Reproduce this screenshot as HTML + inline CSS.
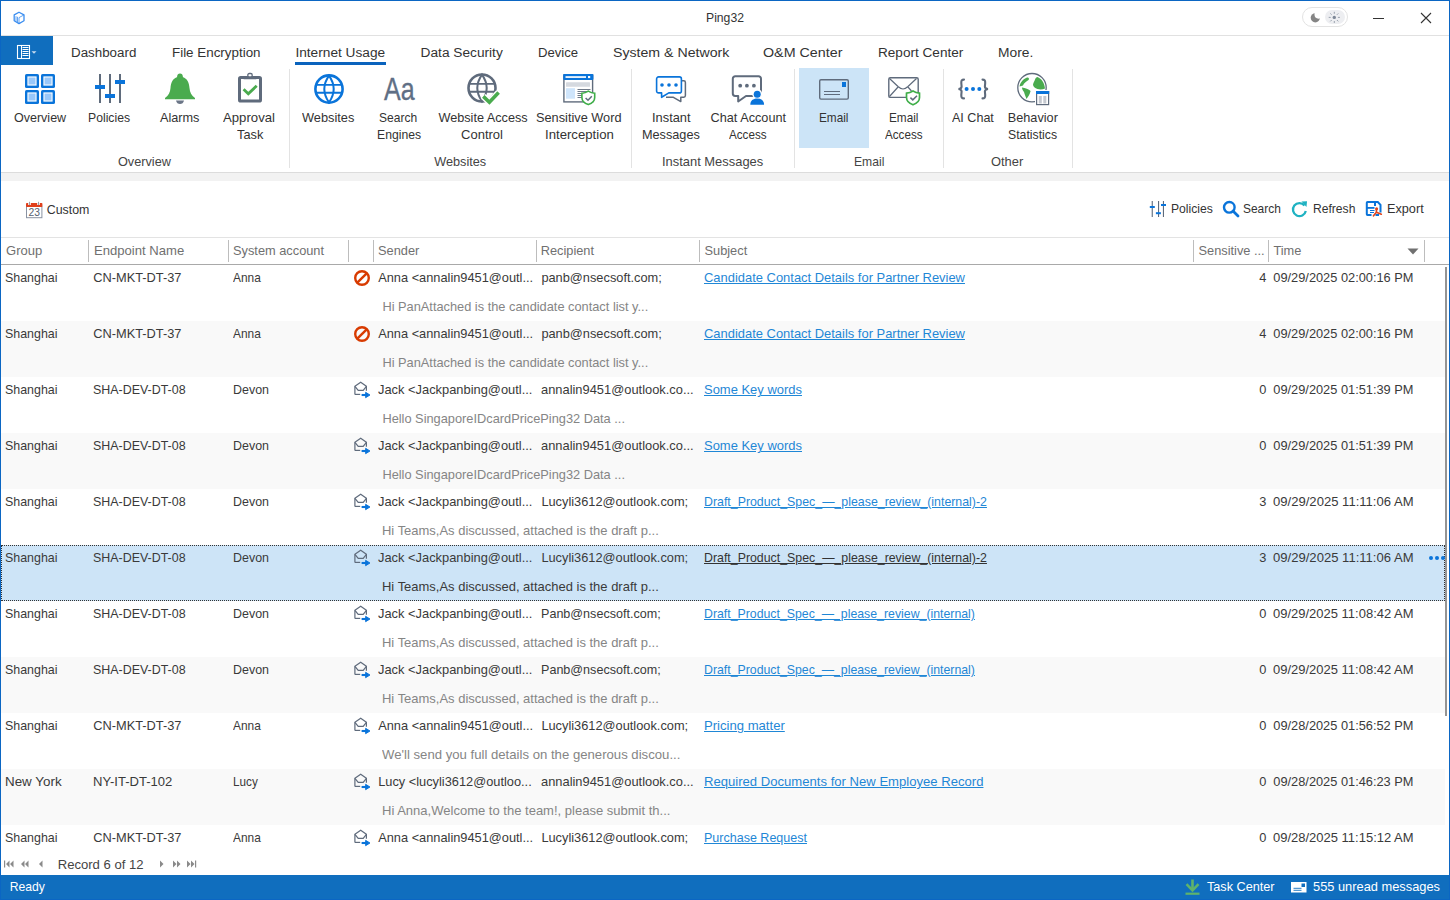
<!DOCTYPE html>
<html><head><meta charset="utf-8"><style>
html,body{margin:0;padding:0;}
body{width:1450px;height:900px;overflow:hidden;position:relative;background:#fff;font-family:"Liberation Sans",sans-serif;}
.t{position:absolute;white-space:nowrap;transform-origin:left top;}
.r{position:absolute;}
svg.r{overflow:visible;}
</style></head><body>
<svg class="r" style="left:13px;top:11px" width="12" height="14" viewBox="0 0 12 14"><path d="M6 1.2 L11 3.9 L11 9.8 L6 12.6 L1.2 9.8 L1.2 3.9 Z" fill="none" stroke="#3b8ef0" stroke-width="1.3" stroke-linejoin="round"/><path d="M6 6.6 L11 3.9 M6 6.6 L6 12.6 M3 5.2 V10.6 M4.5 5.8 V11.4" stroke="#3b8ef0" stroke-width="0.8" fill="none"/></svg>
<div class="t" style="left:706.00px;top:11.87px;font-size:12.2px;line-height:12.2px;color:#333;">Ping32</div>
<div class="r" style="left:1302px;top:7px;width:44px;height:18px;background:#fff;border:1px solid #e3e3e3;border-radius:10px;"></div>
<div class="r" style="left:1325px;top:10px;width:20px;height:14px;background:#edeef1;border-radius:7px;"></div>
<svg class="r" style="left:1309px;top:11px" width="13" height="13" viewBox="0 0 13 13"><circle cx="6.3" cy="6.8" r="4.6" fill="#858585"/><circle cx="9.6" cy="3.6" r="4.1" fill="#fff"/></svg>
<svg class="r" style="left:1327px;top:10px" width="15" height="15" viewBox="0 0 15 15"><circle cx="7.3" cy="7.4" r="1.7" fill="#7d8797"/><g stroke="#8f98a6" stroke-width="0.9" stroke-linecap="round"><path d="M7.3 2.2v1.2M7.3 11.4v1.2M2.1 7.4h1.2M11.3 7.4h1.2M3.6 3.7l0.8 0.8M10.2 10.3l0.8 0.8M3.6 11.1l0.8-0.8M10.2 4.5l0.8-0.8"/></g></svg>
<div class="r" style="left:1373px;top:18px;width:11px;height:1px;background:#333;"></div>
<svg class="r" style="left:1420px;top:12px" width="12" height="12" viewBox="0 0 12 12"><path d="M1 1 L11 11 M11 1 L1 11" stroke="#333" stroke-width="1.1"/></svg>
<div class="r" style="left:1px;top:35px;width:1448px;height:1px;background:#e1e1e1;"></div>
<div class="r" style="left:1px;top:36px;width:52px;height:29px;background:#106ebe;"></div>
<svg class="r" style="left:16px;top:44px" width="24" height="16" viewBox="0 0 24 16"><rect x="1.5" y="1.5" width="12" height="13" fill="none" stroke="#fff" stroke-width="1.1"/><path d="M5.5 2v12" stroke="#fff" stroke-width="1"/><path d="M6.5 3.5h6M6.5 5.5h6M6.5 7.5h6M6.5 9.5h6M6.5 11.5h6" stroke="#fff" stroke-width="1"/><path d="M15.5 7.2 L20.5 7.2 L18 9.8 Z" fill="#c9dcef"/></svg>
<div class="t" style="left:70.80px;top:46.40px;font-size:13.7px;line-height:13.7px;color:#333;transform:scaleX(0.9759);">Dashboard</div>
<div class="t" style="left:171.60px;top:46.40px;font-size:13.7px;line-height:13.7px;color:#333;transform:scaleX(0.9779);">File Encryption</div>
<div class="t" style="left:295.40px;top:46.40px;font-size:13.7px;line-height:13.7px;color:#333;">Internet Usage</div>
<div class="t" style="left:420.60px;top:46.40px;font-size:13.7px;line-height:13.7px;color:#333;">Data Security</div>
<div class="t" style="left:537.60px;top:46.40px;font-size:13.7px;line-height:13.7px;color:#333;transform:scaleX(0.9600);">Device</div>
<div class="t" style="left:612.60px;top:46.40px;font-size:13.7px;line-height:13.7px;color:#333;transform:scaleX(1.0331);">System &amp; Network</div>
<div class="t" style="left:763.20px;top:46.40px;font-size:13.7px;line-height:13.7px;color:#333;transform:scaleX(1.0443);">O&amp;M Center</div>
<div class="t" style="left:877.60px;top:46.40px;font-size:13.7px;line-height:13.7px;color:#333;transform:scaleX(0.9926);">Report Center</div>
<div class="t" style="left:997.70px;top:46.40px;font-size:13.7px;line-height:13.7px;color:#333;transform:scaleX(1.0081);">More.</div>
<div class="r" style="left:295px;top:62px;width:91px;height:3px;background:#0a63bd;"></div>
<div class="r" style="left:289px;top:69px;width:1px;height:99px;background:#e3e3e3;"></div>
<div class="r" style="left:631px;top:69px;width:1px;height:99px;background:#e3e3e3;"></div>
<div class="r" style="left:794px;top:69px;width:1px;height:99px;background:#e3e3e3;"></div>
<div class="r" style="left:943px;top:69px;width:1px;height:99px;background:#e3e3e3;"></div>
<div class="r" style="left:1072px;top:69px;width:1px;height:99px;background:#e3e3e3;"></div>
<div class="r" style="left:799px;top:68px;width:70px;height:80px;background:#cce4f7;"></div>
<svg class="r" style="left:25px;top:74px" width="30" height="30" viewBox="0 0 30 30"><rect x="0" y="0" width="14" height="14" rx="1.6" fill="#0a74da"/><rect x="2.4" y="2.4" width="9.2" height="9.2" fill="#fff"/><rect x="3.5" y="3.5" width="7" height="7" fill="#99c8fa"/><rect x="0" y="16" width="14" height="14" rx="1.6" fill="#0a74da"/><rect x="2.4" y="18.4" width="9.2" height="9.2" fill="#fff"/><rect x="3.5" y="19.5" width="7" height="7" fill="#99c8fa"/><rect x="16" y="0" width="14" height="14" rx="1.6" fill="#0a74da"/><rect x="18.4" y="2.4" width="9.2" height="9.2" fill="#fff"/><rect x="19.5" y="3.5" width="7" height="7" fill="#99c8fa"/><rect x="16" y="16" width="14" height="14" rx="1.6" fill="#0a74da"/><rect x="18.4" y="18.4" width="9.2" height="9.2" fill="#fff"/><rect x="19.5" y="19.5" width="7" height="7" fill="#99c8fa"/></svg>
<div class="t" style="left:13.60px;top:112.05px;font-size:12.7px;line-height:12.7px;color:#333;transform:scaleX(0.9863);">Overview</div>
<svg class="r" style="left:94px;top:74px" width="32" height="30" viewBox="0 0 32 30"><g fill="#5f6b7c"><rect x="5" y="0" width="2" height="29"/><rect x="15" y="0" width="2" height="29"/><rect x="25" y="0" width="2" height="29"/></g><g fill="#0a74da"><rect x="1" y="11" width="10" height="4"/><rect x="11" y="20" width="10" height="4"/><rect x="21" y="6" width="10" height="4"/></g></svg>
<div class="t" style="left:88.45px;top:112.05px;font-size:12.7px;line-height:12.7px;color:#333;transform:scaleX(0.9620);">Policies</div>
<svg class="r" style="left:164px;top:73px" width="32" height="32" viewBox="0 0 32 32"><path d="M16 1.5 C17.6 1.5 18.6 2.6 18.6 4 C23.5 5.6 25.2 10 25.5 15 C25.8 19.5 27.5 22.5 31 25 L31 26.2 L1 26.2 L1 25 C4.5 22.5 6.2 19.5 6.5 15 C6.8 10 8.5 5.6 13.4 4 C13.4 2.6 14.4 1.5 16 1.5 Z" fill="#4aab4e"/><circle cx="16" cy="3.2" r="2.7" fill="#4aab4e"/><path d="M12 27.5 L20 27.5 C19.5 30 18 31 16 31 C14 31 12.5 30 12 27.5 Z" fill="#6b7687"/></svg>
<div class="t" style="left:159.95px;top:112.05px;font-size:12.7px;line-height:12.7px;color:#333;">Alarms</div>
<svg class="r" style="left:236px;top:72px" width="28" height="33" viewBox="0 0 28 33"><rect x="3.5" y="5.6" width="21" height="23.5" rx="1.2" fill="none" stroke="#5f6b7c" stroke-width="3"/><rect x="11.8" y="1.5" width="4.4" height="3.6" rx="1.5" fill="#fff" stroke="#5f6b7c" stroke-width="1.3"/><path d="M7.6 7.2 L9.3 4.4 H18.7 L20.4 7.2 Z" fill="#5f6b7c"/><path d="M7.6 17.2 L12.3 21.8 L20.7 13.8" fill="none" stroke="#4aab4e" stroke-width="2.8"/></svg>
<div class="t" style="left:223.30px;top:112.05px;font-size:12.7px;line-height:12.7px;color:#333;transform:scaleX(1.0375);">Approval</div>
<div class="t" style="left:236.65px;top:128.65px;font-size:12.7px;line-height:12.7px;color:#333;transform:scaleX(1.0072);">Task</div>
<svg class="r" style="left:313px;top:73px" width="32" height="32" viewBox="0 0 32 32"><g fill="none" stroke="#0a74da"><circle cx="16" cy="16" r="13.6" stroke-width="2.6"/><path d="M16 2.6 Q6.6 16 16 29.4 Q25.4 16 16 2.6 Z" stroke-width="2"/><path d="M2.5 11.9 H29.5 M2.5 19.8 H29.5" stroke-width="1.9"/></g></svg>
<div class="t" style="left:302.20px;top:112.05px;font-size:12.7px;line-height:12.7px;color:#333;transform:scaleX(1.0078);">Websites</div>
<div class="t" style="left:383.5px;top:73px;font-size:32px;line-height:32px;color:#5f6f85;transform:scaleX(0.78);-webkit-text-stroke:0.35px #5f6f85;">Aa</div>
<div class="t" style="left:379.45px;top:112.05px;font-size:12.7px;line-height:12.7px;color:#333;transform:scaleX(0.9469);">Search</div>
<div class="t" style="left:376.75px;top:128.65px;font-size:12.7px;line-height:12.7px;color:#333;transform:scaleX(0.9609);">Engines</div>
<svg class="r" style="left:466px;top:72px" width="34" height="33" viewBox="0 0 34 33"><g fill="none" stroke="#5f6b7c"><circle cx="16" cy="16" r="13.5" stroke-width="2.6"/><path d="M16 2.6 Q6.6 16 16 29.4 Q25.4 16 16 2.6 Z" stroke-width="2"/><path d="M2.5 11.9 H29.5 M2.5 19.8 H29.5" stroke-width="1.9"/></g><path d="M17.3 24.4 L23.4 30.2 L32.6 20.6" fill="none" stroke="#fff" stroke-width="6.5"/><path d="M17.3 24.4 L23.4 30.2 L32.6 20.6" fill="none" stroke="#4aab4e" stroke-width="3.6"/></svg>
<div class="t" style="left:438.40px;top:112.05px;font-size:12.7px;line-height:12.7px;color:#333;">Website Access</div>
<div class="t" style="left:461.00px;top:128.65px;font-size:12.7px;line-height:12.7px;color:#333;transform:scaleX(1.0260);">Control</div>
<svg class="r" style="left:562px;top:73px" width="34" height="33" viewBox="0 0 34 33"><rect x="1.9" y="2" width="28.7" height="26.9" fill="#fff" stroke="#5f6b7c" stroke-width="1.4"/><rect x="1.2" y="1" width="30.2" height="6" rx="1" fill="#0a74da"/><rect x="3.5" y="3.2" width="20.5" height="1.7" fill="#fff"/><rect x="26" y="3" width="2.2" height="2.1" fill="#fff"/><rect x="4" y="9.2" width="24" height="4.5" rx="0.5" fill="#d5d9df"/><rect x="4" y="15.2" width="9" height="10.5" fill="#cfe5fb"/><path d="M15.5 16.5h13M15.5 18.5h10M15.5 20.5h8M15.5 22.5h5M15.5 24.5h5" stroke="#5f6b7c" stroke-width="0.9"/><path d="M26.3 18.2 C28.3 19.5 30.8 20.2 32.7 20.3 L32.7 24.5 C32.7 28 29.9 30.4 26.3 31.6 C22.7 30.4 19.9 28 19.9 24.5 L19.9 20.3 C21.8 20.2 24.3 19.5 26.3 18.2 Z" fill="#fff" stroke="#3fae49" stroke-width="1.6"/><path d="M23.6 25 L26 27.2 L29.8 23.3" fill="none" stroke="#5f6b7c" stroke-width="1.5"/></svg>
<div class="t" style="left:536.40px;top:112.05px;font-size:12.7px;line-height:12.7px;color:#333;transform:scaleX(1.0051);">Sensitive Word</div>
<div class="t" style="left:544.65px;top:128.65px;font-size:12.7px;line-height:12.7px;color:#333;transform:scaleX(1.0383);">Interception</div>
<svg class="r" style="left:655px;top:75px" width="32" height="28" viewBox="0 0 32 28"><path d="M27 5.8 H28.8 A1.6 1.6 0 0 1 30.4 7.4 V20.6 A1.6 1.6 0 0 1 28.8 22.2 H25.8 V26.6 L18 22.2 H11" fill="none" stroke="#5f6b7c" stroke-width="1.5" stroke-linejoin="round"/><path d="M3.6 1.9 H24.4 A2 2 0 0 1 26.4 3.9 V15.9 A2 2 0 0 1 24.4 17.9 H13.8 L6.6 22.3 V17.9 H3.6 A2 2 0 0 1 1.6 15.9 V3.9 A2 2 0 0 1 3.6 1.9 Z" fill="#fff" stroke="#0a74da" stroke-width="1.6" stroke-linejoin="round"/><g fill="#0a74da"><circle cx="7" cy="10" r="1.8"/><circle cx="14" cy="10" r="1.8"/><circle cx="21" cy="10" r="1.8"/></g></svg>
<div class="t" style="left:651.60px;top:112.05px;font-size:12.7px;line-height:12.7px;color:#333;transform:scaleX(1.0125);">Instant</div>
<div class="t" style="left:642.00px;top:128.65px;font-size:12.7px;line-height:12.7px;color:#333;">Messages</div>
<svg class="r" style="left:731px;top:74px" width="35" height="32" viewBox="0 0 35 32"><path d="M4.2 2.3 H27.6 A2.4 2.4 0 0 1 30 4.7 V19.6 A2.4 2.4 0 0 1 27.6 22 H15 L7.2 27.5 V22 H4.2 A2.4 2.4 0 0 1 1.8 19.6 V4.7 A2.4 2.4 0 0 1 4.2 2.3 Z" fill="none" stroke="#5f6b7c" stroke-width="2" stroke-linejoin="round"/><g fill="#5f6b7c"><circle cx="9.2" cy="11.7" r="1.9"/><circle cx="15.9" cy="11.7" r="1.9"/><circle cx="22.9" cy="11.7" r="1.9"/></g><circle cx="26.2" cy="20" r="5" fill="#fff"/><path d="M17.8 31.5 C17.8 27 21 24.6 26.2 24.6 C31.4 24.6 34.6 27 34.6 31.5 Z" fill="#fff"/><circle cx="26.2" cy="20.2" r="3.5" fill="#0a74da"/><path d="M19.3 30.8 C19.3 26.8 22 24.6 26.2 24.6 C30.5 24.6 33.1 26.8 33.1 30.8 Z" fill="#0a74da"/></svg>
<div class="t" style="left:710.60px;top:112.05px;font-size:12.7px;line-height:12.7px;color:#333;">Chat Account</div>
<div class="t" style="left:728.80px;top:128.65px;font-size:12.7px;line-height:12.7px;color:#333;transform:scaleX(0.9186);">Access</div>
<svg class="r" style="left:818px;top:78px" width="32" height="23" viewBox="0 0 32 23"><rect x="1.7" y="1.7" width="28.6" height="19.4" rx="1.3" fill="none" stroke="#5f6b7c" stroke-width="1.4"/><rect x="24" y="4" width="4" height="5" fill="#0a74da"/><path d="M6 13.5 H22 M6 16.5 H22" stroke="#5f6b7c" stroke-width="1.1"/></svg>
<div class="t" style="left:818.75px;top:112.05px;font-size:12.7px;line-height:12.7px;color:#333;transform:scaleX(0.9290);">Email</div>
<svg class="r" style="left:887px;top:76px" width="35" height="30" viewBox="0 0 35 30"><rect x="1.8" y="1.8" width="29.4" height="19.6" rx="1.5" fill="none" stroke="#5f6b7c" stroke-width="1.4"/><path d="M2.5 2.5 L11 10.5 C13 12.3 15 13 16 13 C17 13 19 12.3 21 10.5 L29.5 2.5 M11.5 10.5 L2.5 20.5 M20.5 10.5 L24.5 15" fill="none" stroke="#5f6b7c" stroke-width="1.2"/><path d="M26 15 C28 16.3 30.5 17 32.5 17.2 L32.5 21.5 C32.5 25 29.7 27.4 26 28.8 C22.3 27.4 19.5 25 19.5 21.5 L19.5 17.2 C21.5 17 24 16.3 26 15 Z" fill="#fff" stroke="#3fae49" stroke-width="1.7"/><path d="M23.4 21.6 L25.8 23.9 L30 19.8" fill="none" stroke="#5f6b7c" stroke-width="1.5"/></svg>
<div class="t" style="left:888.65px;top:112.05px;font-size:12.7px;line-height:12.7px;color:#333;transform:scaleX(0.9290);">Email</div>
<div class="t" style="left:884.70px;top:128.65px;font-size:12.7px;line-height:12.7px;color:#333;transform:scaleX(0.9186);">Access</div>
<svg class="r" style="left:957px;top:78px" width="33" height="22" viewBox="0 0 33 22"><g fill="none" stroke="#5f6b7c" stroke-width="2.1" stroke-linecap="round"><path d="M7 1.6 C4.8 1.6 4.2 2.8 4.3 5 L4.6 8.5 C4.6 10 3.8 10.8 1.5 11 C3.8 11.3 4.6 12 4.6 13.5 L4.3 17 C4.2 19.2 4.8 20.4 7 20.4"/><path d="M25.5 1.6 C27.7 1.6 28.3 2.8 28.2 5 L27.9 8.5 C27.9 10 28.7 10.8 31 11 C28.7 11.3 27.9 12 27.9 13.5 L28.2 17 C28.3 19.2 27.7 20.4 25.5 20.4"/></g><g fill="#0a74da"><circle cx="9.6" cy="11" r="2"/><circle cx="16" cy="11" r="2"/><circle cx="22.3" cy="11" r="2"/></g></svg>
<div class="t" style="left:952.05px;top:112.05px;font-size:12.7px;line-height:12.7px;color:#333;transform:scaleX(0.9893);">AI Chat</div>
<svg class="r" style="left:1016px;top:72px" width="35" height="35" viewBox="0 0 35 35"><circle cx="16" cy="15.7" r="14.2" fill="#fff" stroke="#5f6b7c" stroke-width="1.3"/><path d="M3.5 14.5 C4 11 7 7 11 5.5 C13 5.2 13.5 7 12.5 8 C10 10 8 11 7 13.5 Z" fill="#4aab4e"/><path d="M6 15.5 C9 16 13 17 14.6 19 C14 22 12 25 10.5 27 C9.5 24 8.5 22 8 20 C7 18.5 6 17.5 6 15.5 Z" fill="#4aab4e"/><path d="M21.5 5 C25.5 6.5 28.5 11 29 16.5 C27 17.5 24 17.8 21.5 17 C19 16 17 14.5 17 12.5 C17.5 10.5 18.5 9 19 7.5 C19.5 6 20.5 5 21.5 5 Z" fill="#4aab4e"/><rect x="19" y="18" width="15.5" height="16.5" fill="#fff"/><rect x="20.6" y="19.6" width="12" height="13" fill="#fff" stroke="#5f6b7c" stroke-width="1.2"/><rect x="20" y="19" width="13.2" height="3" fill="#0a74da"/><rect x="22.8" y="24" width="3" height="7.5" fill="#c5c9d0"/><rect x="27.3" y="24" width="3" height="7.5" fill="#c5c9d0"/></svg>
<div class="t" style="left:1007.80px;top:112.05px;font-size:12.7px;line-height:12.7px;color:#333;">Behavior</div>
<div class="t" style="left:1008.45px;top:128.65px;font-size:12.7px;line-height:12.7px;color:#333;transform:scaleX(0.9663);">Statistics</div>
<div class="t" style="left:118.00px;top:156.05px;font-size:12.7px;line-height:12.7px;color:#444;">Overview</div>
<div class="t" style="left:434.25px;top:156.05px;font-size:12.7px;line-height:12.7px;color:#444;">Websites</div>
<div class="t" style="left:662.35px;top:156.05px;font-size:12.7px;line-height:12.7px;color:#444;transform:scaleX(1.0178);">Instant Messages</div>
<div class="t" style="left:853.60px;top:156.05px;font-size:12.7px;line-height:12.7px;color:#444;transform:scaleX(0.9573);">Email</div>
<div class="t" style="left:991.45px;top:156.05px;font-size:12.7px;line-height:12.7px;color:#444;transform:scaleX(1.0170);">Other</div>
<div class="r" style="left:1px;top:172px;width:1448px;height:1px;background:#dcdcdc;"></div>
<div class="r" style="left:1px;top:173px;width:1448px;height:8px;background:#f2f2f2;"></div>
<svg class="r" style="left:25px;top:201px" width="18" height="18" viewBox="0 0 18 18"><rect x="1.5" y="5.2" width="15.4" height="11.5" fill="#fff" stroke="#8a93a2" stroke-width="1"/><rect x="1" y="2" width="16.4" height="4" rx="0.8" fill="#e0401c"/><rect x="3.2" y="1" width="2.6" height="3" fill="#fff"/><rect x="12.2" y="1" width="2.6" height="3" fill="#fff"/><path d="M4.5 0.8v3.2M13.5 0.8v3.2" stroke="#8a93a2" stroke-width="0.9"/><text x="9.2" y="14.7" font-family="Liberation Sans" font-size="10.3" text-anchor="middle" fill="#56606f">23</text></svg>
<div class="t" style="left:46.70px;top:204.40px;font-size:12.4px;line-height:12.4px;color:#333;">Custom</div>
<svg class="r" style="left:1149px;top:200px" width="18" height="18" viewBox="0 0 18 18"><g fill="#5f6b7c"><rect x="2.7" y="1" width="1.1" height="16"/><rect x="9" y="1" width="1.1" height="16"/><rect x="13.9" y="1" width="1.1" height="16"/></g><g fill="#0a74da"><rect x="0.8" y="6" width="5" height="2"/><rect x="6.9" y="12.2" width="5" height="2"/><rect x="12" y="4" width="5" height="2"/></g></svg>
<div class="t" style="left:1170.50px;top:202.50px;font-size:12.4px;line-height:12.4px;color:#333;transform:scaleX(0.9806);">Policies</div>
<svg class="r" style="left:1222px;top:200px" width="18" height="18" viewBox="0 0 18 18"><circle cx="7.3" cy="7.3" r="5.3" fill="none" stroke="#0a74da" stroke-width="2.4"/><path d="M11 11 L16 16" stroke="#0a74da" stroke-width="2.8" stroke-linecap="round"/></svg>
<div class="t" style="left:1243.40px;top:202.50px;font-size:12.4px;line-height:12.4px;color:#333;transform:scaleX(0.9622);">Search</div>
<svg class="r" style="left:1291px;top:200px" width="18" height="18" viewBox="0 0 18 18"><path d="M13.5 5.5 A6.5 6.5 0 1 0 14.8 11" fill="none" stroke="#1fb2c2" stroke-width="2.3"/><path d="M10.5 1.5 L16 1.2 L15.5 7 Z" fill="#1fb2c2"/></svg>
<div class="t" style="left:1312.90px;top:202.50px;font-size:12.4px;line-height:12.4px;color:#333;transform:scaleX(0.9766);">Refresh</div>
<svg class="r" style="left:1365px;top:200px" width="18" height="18" viewBox="0 0 18 18"><path d="M6.5 15 H2.5 Q1.8 15 1.8 14.3 V2.7 Q1.8 2 2.5 2 H12.8 L15.5 4.8 V12.5" fill="none" stroke="#0a74da" stroke-width="2"/><path d="M10.5 15 H14" stroke="#0a74da" stroke-width="2"/><rect x="2" y="7" width="7.5" height="1.8" fill="#0a74da"/><rect x="9" y="2.8" width="2" height="3.2" fill="#0a74da"/><path d="M5 10.5 H9.5 M5 12.5 H9" stroke="#0a74da" stroke-width="1.1"/><g stroke="#e0441c" stroke-width="1.7" stroke-linecap="round" fill="none"><path d="M11.5 9 L11.4 12.3 L8.5 15.8 M11.4 12.3 L16.3 14.2"/></g><circle cx="11.6" cy="8.7" r="1.5" fill="#e0441c"/></svg>
<div class="t" style="left:1386.90px;top:202.50px;font-size:12.4px;line-height:12.4px;color:#333;transform:scaleX(1.0241);">Export</div>
<div class="r" style="left:1px;top:237px;width:1448px;height:1px;background:#e3e3e3;"></div>
<div class="r" style="left:1px;top:264px;width:1448px;height:1px;background:#a9a9a9;"></div>
<div class="r" style="left:88px;top:240px;width:1px;height:22px;background:#bdbdbd;"></div>
<div class="r" style="left:228px;top:240px;width:1px;height:22px;background:#bdbdbd;"></div>
<div class="r" style="left:348px;top:240px;width:1px;height:22px;background:#bdbdbd;"></div>
<div class="r" style="left:373px;top:240px;width:1px;height:22px;background:#bdbdbd;"></div>
<div class="r" style="left:536px;top:240px;width:1px;height:22px;background:#bdbdbd;"></div>
<div class="r" style="left:699px;top:240px;width:1px;height:22px;background:#bdbdbd;"></div>
<div class="r" style="left:1193px;top:240px;width:1px;height:22px;background:#bdbdbd;"></div>
<div class="r" style="left:1268px;top:240px;width:1px;height:22px;background:#bdbdbd;"></div>
<div class="r" style="left:1424px;top:240px;width:1px;height:22px;background:#bdbdbd;"></div>
<div class="t" style="left:5.50px;top:245.16px;font-size:12.8px;line-height:12.8px;color:#707070;transform:scaleX(1.0177);">Group</div>
<div class="t" style="left:93.50px;top:245.16px;font-size:12.8px;line-height:12.8px;color:#707070;transform:scaleX(1.0235);">Endpoint Name</div>
<div class="t" style="left:233.00px;top:245.16px;font-size:12.8px;line-height:12.8px;color:#707070;">System account</div>
<div class="t" style="left:378.00px;top:245.16px;font-size:12.8px;line-height:12.8px;color:#707070;">Sender</div>
<div class="t" style="left:540.70px;top:245.16px;font-size:12.8px;line-height:12.8px;color:#707070;">Recipient</div>
<div class="t" style="left:704.50px;top:245.16px;font-size:12.8px;line-height:12.8px;color:#707070;">Subject</div>
<div class="t" style="left:1198.50px;top:245.16px;font-size:12.8px;line-height:12.8px;color:#707070;">Sensitive ...</div>
<div class="t" style="left:1273.40px;top:245.16px;font-size:12.8px;line-height:12.8px;color:#707070;">Time</div>
<svg class="r" style="left:1407px;top:248px" width="12" height="7" viewBox="0 0 12 7"><path d="M0.5 0.5 L11.5 0.5 L6 6.5 Z" fill="#707070"/></svg>
<div class="t" style="left:5.00px;top:272.36px;font-size:12.8px;line-height:12.8px;color:#3a3a3a;transform:scaleX(0.9706);">Shanghai</div>
<div class="t" style="left:93.30px;top:272.36px;font-size:12.8px;line-height:12.8px;color:#3a3a3a;">CN-MKT-DT-37</div>
<div class="t" style="left:233.30px;top:272.36px;font-size:12.8px;line-height:12.8px;color:#3a3a3a;transform:scaleX(0.9300);">Anna</div>
<svg class="r" style="left:353px;top:269px" width="18" height="18" viewBox="0 0 18 18"><circle cx="9" cy="9" r="6.8" fill="none" stroke="#d83b01" stroke-width="2.4"/><path d="M4.3 13.7 L13.7 4.3" stroke="#d83b01" stroke-width="2.4"/></svg>
<div class="t" style="left:378.20px;top:272.36px;font-size:12.8px;line-height:12.8px;color:#3a3a3a;">Anna &lt;annalin9451@outl...</div>
<div class="t" style="left:541.40px;top:272.36px;font-size:12.8px;line-height:12.8px;color:#3a3a3a;">panb@nsecsoft.com;</div>
<div class="t" style="left:704px;top:272.36px;font-size:12.8px;line-height:12.8px;color:#1f87d6;text-decoration:underline;transform:scaleX(1.0107);">Candidate Contact Details for Partner Review</div>
<div class="t" style="left:1259.14px;top:272.36px;font-size:12.8px;line-height:12.8px;color:#3a3a3a;">4</div>
<div class="t" style="left:1273.30px;top:272.36px;font-size:12.8px;line-height:12.8px;color:#3a3a3a;">09/29/2025 02:00:16 PM</div>
<div class="t" style="left:382.40px;top:301.36px;font-size:12.8px;line-height:12.8px;color:#858585;">Hi PanAttached is the candidate contact list y...</div>
<div class="r" style="left:1px;top:321px;width:1444px;height:56px;background:#f9f9f9;"></div>
<div class="t" style="left:5.00px;top:328.36px;font-size:12.8px;line-height:12.8px;color:#3a3a3a;transform:scaleX(0.9706);">Shanghai</div>
<div class="t" style="left:93.30px;top:328.36px;font-size:12.8px;line-height:12.8px;color:#3a3a3a;">CN-MKT-DT-37</div>
<div class="t" style="left:233.30px;top:328.36px;font-size:12.8px;line-height:12.8px;color:#3a3a3a;transform:scaleX(0.9300);">Anna</div>
<svg class="r" style="left:353px;top:325px" width="18" height="18" viewBox="0 0 18 18"><circle cx="9" cy="9" r="6.8" fill="none" stroke="#d83b01" stroke-width="2.4"/><path d="M4.3 13.7 L13.7 4.3" stroke="#d83b01" stroke-width="2.4"/></svg>
<div class="t" style="left:378.20px;top:328.36px;font-size:12.8px;line-height:12.8px;color:#3a3a3a;">Anna &lt;annalin9451@outl...</div>
<div class="t" style="left:541.40px;top:328.36px;font-size:12.8px;line-height:12.8px;color:#3a3a3a;">panb@nsecsoft.com;</div>
<div class="t" style="left:704px;top:328.36px;font-size:12.8px;line-height:12.8px;color:#1f87d6;text-decoration:underline;transform:scaleX(1.0107);">Candidate Contact Details for Partner Review</div>
<div class="t" style="left:1259.14px;top:328.36px;font-size:12.8px;line-height:12.8px;color:#3a3a3a;">4</div>
<div class="t" style="left:1273.30px;top:328.36px;font-size:12.8px;line-height:12.8px;color:#3a3a3a;">09/29/2025 02:00:16 PM</div>
<div class="t" style="left:382.40px;top:357.36px;font-size:12.8px;line-height:12.8px;color:#858585;">Hi PanAttached is the candidate contact list y...</div>
<div class="t" style="left:5.00px;top:384.36px;font-size:12.8px;line-height:12.8px;color:#3a3a3a;transform:scaleX(0.9706);">Shanghai</div>
<div class="t" style="left:93.30px;top:384.36px;font-size:12.8px;line-height:12.8px;color:#3a3a3a;transform:scaleX(0.9715);">SHA-DEV-DT-08</div>
<div class="t" style="left:233.30px;top:384.36px;font-size:12.8px;line-height:12.8px;color:#3a3a3a;transform:scaleX(0.9730);">Devon</div>
<svg class="r" style="left:353px;top:380px" width="19" height="20" viewBox="0 0 19 20"><g fill="none" stroke="#5f6b7c" stroke-width="1.2" stroke-linejoin="round"><path d="M1.9 14.4 L1.9 6.3 L7.7 2.2 L13.4 6.3 L13.4 10.8"/><path d="M1.9 6.3 L5.2 10.4 L10.2 10.4 L13.4 6.3"/><path d="M1.9 14.4 L7.2 14.4"/></g><path d="M8.6 15 H13.5" stroke="#0a74da" stroke-width="2.1"/><path d="M12.6 12.3 L17 15 L12.6 17.7 Z" fill="#0a74da" stroke="#0a74da" stroke-width="0.9" stroke-linejoin="round"/></svg>
<div class="t" style="left:378.20px;top:384.36px;font-size:12.8px;line-height:12.8px;color:#3a3a3a;transform:scaleX(1.0057);">Jack &lt;Jackpanbing@outl...</div>
<div class="t" style="left:541.40px;top:384.36px;font-size:12.8px;line-height:12.8px;color:#3a3a3a;transform:scaleX(1.0062);">annalin9451@outlook.co...</div>
<div class="t" style="left:704px;top:384.36px;font-size:12.8px;line-height:12.8px;color:#1f87d6;text-decoration:underline;transform:scaleX(1.0130);">Some Key words</div>
<div class="t" style="left:1259.14px;top:384.36px;font-size:12.8px;line-height:12.8px;color:#3a3a3a;">0</div>
<div class="t" style="left:1273.30px;top:384.36px;font-size:12.8px;line-height:12.8px;color:#3a3a3a;">09/29/2025 01:51:39 PM</div>
<div class="t" style="left:382.40px;top:413.36px;font-size:12.8px;line-height:12.8px;color:#858585;">Hello SingaporeIDcardPricePing32 Data ...</div>
<div class="r" style="left:1px;top:433px;width:1444px;height:56px;background:#f9f9f9;"></div>
<div class="t" style="left:5.00px;top:440.36px;font-size:12.8px;line-height:12.8px;color:#3a3a3a;transform:scaleX(0.9706);">Shanghai</div>
<div class="t" style="left:93.30px;top:440.36px;font-size:12.8px;line-height:12.8px;color:#3a3a3a;transform:scaleX(0.9715);">SHA-DEV-DT-08</div>
<div class="t" style="left:233.30px;top:440.36px;font-size:12.8px;line-height:12.8px;color:#3a3a3a;transform:scaleX(0.9730);">Devon</div>
<svg class="r" style="left:353px;top:436px" width="19" height="20" viewBox="0 0 19 20"><g fill="none" stroke="#5f6b7c" stroke-width="1.2" stroke-linejoin="round"><path d="M1.9 14.4 L1.9 6.3 L7.7 2.2 L13.4 6.3 L13.4 10.8"/><path d="M1.9 6.3 L5.2 10.4 L10.2 10.4 L13.4 6.3"/><path d="M1.9 14.4 L7.2 14.4"/></g><path d="M8.6 15 H13.5" stroke="#0a74da" stroke-width="2.1"/><path d="M12.6 12.3 L17 15 L12.6 17.7 Z" fill="#0a74da" stroke="#0a74da" stroke-width="0.9" stroke-linejoin="round"/></svg>
<div class="t" style="left:378.20px;top:440.36px;font-size:12.8px;line-height:12.8px;color:#3a3a3a;transform:scaleX(1.0057);">Jack &lt;Jackpanbing@outl...</div>
<div class="t" style="left:541.40px;top:440.36px;font-size:12.8px;line-height:12.8px;color:#3a3a3a;transform:scaleX(1.0062);">annalin9451@outlook.co...</div>
<div class="t" style="left:704px;top:440.36px;font-size:12.8px;line-height:12.8px;color:#1f87d6;text-decoration:underline;transform:scaleX(1.0130);">Some Key words</div>
<div class="t" style="left:1259.14px;top:440.36px;font-size:12.8px;line-height:12.8px;color:#3a3a3a;">0</div>
<div class="t" style="left:1273.30px;top:440.36px;font-size:12.8px;line-height:12.8px;color:#3a3a3a;">09/29/2025 01:51:39 PM</div>
<div class="t" style="left:382.40px;top:469.36px;font-size:12.8px;line-height:12.8px;color:#858585;">Hello SingaporeIDcardPricePing32 Data ...</div>
<div class="t" style="left:5.00px;top:496.36px;font-size:12.8px;line-height:12.8px;color:#3a3a3a;transform:scaleX(0.9706);">Shanghai</div>
<div class="t" style="left:93.30px;top:496.36px;font-size:12.8px;line-height:12.8px;color:#3a3a3a;transform:scaleX(0.9715);">SHA-DEV-DT-08</div>
<div class="t" style="left:233.30px;top:496.36px;font-size:12.8px;line-height:12.8px;color:#3a3a3a;transform:scaleX(0.9730);">Devon</div>
<svg class="r" style="left:353px;top:492px" width="19" height="20" viewBox="0 0 19 20"><g fill="none" stroke="#5f6b7c" stroke-width="1.2" stroke-linejoin="round"><path d="M1.9 14.4 L1.9 6.3 L7.7 2.2 L13.4 6.3 L13.4 10.8"/><path d="M1.9 6.3 L5.2 10.4 L10.2 10.4 L13.4 6.3"/><path d="M1.9 14.4 L7.2 14.4"/></g><path d="M8.6 15 H13.5" stroke="#0a74da" stroke-width="2.1"/><path d="M12.6 12.3 L17 15 L12.6 17.7 Z" fill="#0a74da" stroke="#0a74da" stroke-width="0.9" stroke-linejoin="round"/></svg>
<div class="t" style="left:378.20px;top:496.36px;font-size:12.8px;line-height:12.8px;color:#3a3a3a;transform:scaleX(1.0057);">Jack &lt;Jackpanbing@outl...</div>
<div class="t" style="left:541.40px;top:496.36px;font-size:12.8px;line-height:12.8px;color:#3a3a3a;">Lucyli3612@outlook.com;</div>
<div class="t" style="left:704px;top:496.36px;font-size:12.8px;line-height:12.8px;color:#1f87d6;text-decoration:underline;transform:scaleX(0.9655);">Draft_Product_Spec_—_please_review_(internal)-2</div>
<div class="t" style="left:1259.14px;top:496.36px;font-size:12.8px;line-height:12.8px;color:#3a3a3a;">3</div>
<div class="t" style="left:1273.30px;top:496.36px;font-size:12.8px;line-height:12.8px;color:#3a3a3a;transform:scaleX(1.0219);">09/29/2025 11:11:06 AM</div>
<div class="t" style="left:382.40px;top:525.36px;font-size:12.8px;line-height:12.8px;color:#858585;transform:scaleX(1.0141);">Hi Teams,As discussed, attached is the draft p...</div>
<div class="r" style="left:1px;top:545px;width:1444px;height:56px;background:#cde4f7;"></div>
<div class="r" style="left:1px;top:545px;width:1443px;height:55px;border:1px dotted #333;box-sizing:border-box;width:1444px;height:56px"></div>
<div class="t" style="left:5.00px;top:552.36px;font-size:12.8px;line-height:12.8px;color:#3a3a3a;transform:scaleX(0.9706);">Shanghai</div>
<div class="t" style="left:93.30px;top:552.36px;font-size:12.8px;line-height:12.8px;color:#3a3a3a;transform:scaleX(0.9715);">SHA-DEV-DT-08</div>
<div class="t" style="left:233.30px;top:552.36px;font-size:12.8px;line-height:12.8px;color:#3a3a3a;transform:scaleX(0.9730);">Devon</div>
<svg class="r" style="left:353px;top:548px" width="19" height="20" viewBox="0 0 19 20"><g fill="none" stroke="#5f6b7c" stroke-width="1.2" stroke-linejoin="round"><path d="M1.9 14.4 L1.9 6.3 L7.7 2.2 L13.4 6.3 L13.4 10.8"/><path d="M1.9 6.3 L5.2 10.4 L10.2 10.4 L13.4 6.3"/><path d="M1.9 14.4 L7.2 14.4"/></g><path d="M8.6 15 H13.5" stroke="#0a74da" stroke-width="2.1"/><path d="M12.6 12.3 L17 15 L12.6 17.7 Z" fill="#0a74da" stroke="#0a74da" stroke-width="0.9" stroke-linejoin="round"/></svg>
<div class="t" style="left:378.20px;top:552.36px;font-size:12.8px;line-height:12.8px;color:#3a3a3a;transform:scaleX(1.0057);">Jack &lt;Jackpanbing@outl...</div>
<div class="t" style="left:541.40px;top:552.36px;font-size:12.8px;line-height:12.8px;color:#3a3a3a;">Lucyli3612@outlook.com;</div>
<div class="t" style="left:704px;top:552.36px;font-size:12.8px;line-height:12.8px;color:#333;text-decoration:underline;transform:scaleX(0.9655);">Draft_Product_Spec_—_please_review_(internal)-2</div>
<div class="t" style="left:1259.14px;top:552.36px;font-size:12.8px;line-height:12.8px;color:#3a3a3a;">3</div>
<div class="t" style="left:1273.30px;top:552.36px;font-size:12.8px;line-height:12.8px;color:#3a3a3a;transform:scaleX(1.0219);">09/29/2025 11:11:06 AM</div>
<div class="t" style="left:382.40px;top:581.36px;font-size:12.8px;line-height:12.8px;color:#3a3a3a;transform:scaleX(1.0141);">Hi Teams,As discussed, attached is the draft p...</div>
<svg class="r" style="left:1428px;top:554px" width="18" height="8" viewBox="0 0 18 8"><g fill="#0a74da"><circle cx="3" cy="4" r="2"/><circle cx="9" cy="4" r="2"/><circle cx="15" cy="4" r="2"/></g></svg>
<div class="t" style="left:5.00px;top:608.36px;font-size:12.8px;line-height:12.8px;color:#3a3a3a;transform:scaleX(0.9706);">Shanghai</div>
<div class="t" style="left:93.30px;top:608.36px;font-size:12.8px;line-height:12.8px;color:#3a3a3a;transform:scaleX(0.9715);">SHA-DEV-DT-08</div>
<div class="t" style="left:233.30px;top:608.36px;font-size:12.8px;line-height:12.8px;color:#3a3a3a;transform:scaleX(0.9730);">Devon</div>
<svg class="r" style="left:353px;top:604px" width="19" height="20" viewBox="0 0 19 20"><g fill="none" stroke="#5f6b7c" stroke-width="1.2" stroke-linejoin="round"><path d="M1.9 14.4 L1.9 6.3 L7.7 2.2 L13.4 6.3 L13.4 10.8"/><path d="M1.9 6.3 L5.2 10.4 L10.2 10.4 L13.4 6.3"/><path d="M1.9 14.4 L7.2 14.4"/></g><path d="M8.6 15 H13.5" stroke="#0a74da" stroke-width="2.1"/><path d="M12.6 12.3 L17 15 L12.6 17.7 Z" fill="#0a74da" stroke="#0a74da" stroke-width="0.9" stroke-linejoin="round"/></svg>
<div class="t" style="left:378.20px;top:608.36px;font-size:12.8px;line-height:12.8px;color:#3a3a3a;transform:scaleX(1.0057);">Jack &lt;Jackpanbing@outl...</div>
<div class="t" style="left:541.40px;top:608.36px;font-size:12.8px;line-height:12.8px;color:#3a3a3a;transform:scaleX(0.9824);">Panb@nsecsoft.com;</div>
<div class="t" style="left:704px;top:608.36px;font-size:12.8px;line-height:12.8px;color:#1f87d6;text-decoration:underline;transform:scaleX(0.9619);">Draft_Product_Spec_—_please_review_(internal)</div>
<div class="t" style="left:1259.14px;top:608.36px;font-size:12.8px;line-height:12.8px;color:#3a3a3a;">0</div>
<div class="t" style="left:1273.30px;top:608.36px;font-size:12.8px;line-height:12.8px;color:#3a3a3a;transform:scaleX(1.0149);">09/29/2025 11:08:42 AM</div>
<div class="t" style="left:382.40px;top:637.36px;font-size:12.8px;line-height:12.8px;color:#858585;transform:scaleX(1.0141);">Hi Teams,As discussed, attached is the draft p...</div>
<div class="r" style="left:1px;top:657px;width:1444px;height:56px;background:#f9f9f9;"></div>
<div class="t" style="left:5.00px;top:664.36px;font-size:12.8px;line-height:12.8px;color:#3a3a3a;transform:scaleX(0.9706);">Shanghai</div>
<div class="t" style="left:93.30px;top:664.36px;font-size:12.8px;line-height:12.8px;color:#3a3a3a;transform:scaleX(0.9715);">SHA-DEV-DT-08</div>
<div class="t" style="left:233.30px;top:664.36px;font-size:12.8px;line-height:12.8px;color:#3a3a3a;transform:scaleX(0.9730);">Devon</div>
<svg class="r" style="left:353px;top:660px" width="19" height="20" viewBox="0 0 19 20"><g fill="none" stroke="#5f6b7c" stroke-width="1.2" stroke-linejoin="round"><path d="M1.9 14.4 L1.9 6.3 L7.7 2.2 L13.4 6.3 L13.4 10.8"/><path d="M1.9 6.3 L5.2 10.4 L10.2 10.4 L13.4 6.3"/><path d="M1.9 14.4 L7.2 14.4"/></g><path d="M8.6 15 H13.5" stroke="#0a74da" stroke-width="2.1"/><path d="M12.6 12.3 L17 15 L12.6 17.7 Z" fill="#0a74da" stroke="#0a74da" stroke-width="0.9" stroke-linejoin="round"/></svg>
<div class="t" style="left:378.20px;top:664.36px;font-size:12.8px;line-height:12.8px;color:#3a3a3a;transform:scaleX(1.0057);">Jack &lt;Jackpanbing@outl...</div>
<div class="t" style="left:541.40px;top:664.36px;font-size:12.8px;line-height:12.8px;color:#3a3a3a;transform:scaleX(0.9824);">Panb@nsecsoft.com;</div>
<div class="t" style="left:704px;top:664.36px;font-size:12.8px;line-height:12.8px;color:#1f87d6;text-decoration:underline;transform:scaleX(0.9619);">Draft_Product_Spec_—_please_review_(internal)</div>
<div class="t" style="left:1259.14px;top:664.36px;font-size:12.8px;line-height:12.8px;color:#3a3a3a;">0</div>
<div class="t" style="left:1273.30px;top:664.36px;font-size:12.8px;line-height:12.8px;color:#3a3a3a;transform:scaleX(1.0149);">09/29/2025 11:08:42 AM</div>
<div class="t" style="left:382.40px;top:693.36px;font-size:12.8px;line-height:12.8px;color:#858585;transform:scaleX(1.0141);">Hi Teams,As discussed, attached is the draft p...</div>
<div class="t" style="left:5.00px;top:720.36px;font-size:12.8px;line-height:12.8px;color:#3a3a3a;transform:scaleX(0.9706);">Shanghai</div>
<div class="t" style="left:93.30px;top:720.36px;font-size:12.8px;line-height:12.8px;color:#3a3a3a;">CN-MKT-DT-37</div>
<div class="t" style="left:233.30px;top:720.36px;font-size:12.8px;line-height:12.8px;color:#3a3a3a;transform:scaleX(0.9300);">Anna</div>
<svg class="r" style="left:353px;top:716px" width="19" height="20" viewBox="0 0 19 20"><g fill="none" stroke="#5f6b7c" stroke-width="1.2" stroke-linejoin="round"><path d="M1.9 14.4 L1.9 6.3 L7.7 2.2 L13.4 6.3 L13.4 10.8"/><path d="M1.9 6.3 L5.2 10.4 L10.2 10.4 L13.4 6.3"/><path d="M1.9 14.4 L7.2 14.4"/></g><path d="M8.6 15 H13.5" stroke="#0a74da" stroke-width="2.1"/><path d="M12.6 12.3 L17 15 L12.6 17.7 Z" fill="#0a74da" stroke="#0a74da" stroke-width="0.9" stroke-linejoin="round"/></svg>
<div class="t" style="left:378.20px;top:720.36px;font-size:12.8px;line-height:12.8px;color:#3a3a3a;">Anna &lt;annalin9451@outl...</div>
<div class="t" style="left:541.40px;top:720.36px;font-size:12.8px;line-height:12.8px;color:#3a3a3a;">Lucyli3612@outlook.com;</div>
<div class="t" style="left:704px;top:720.36px;font-size:12.8px;line-height:12.8px;color:#1f87d6;text-decoration:underline;transform:scaleX(1.0234);">Pricing matter</div>
<div class="t" style="left:1259.14px;top:720.36px;font-size:12.8px;line-height:12.8px;color:#3a3a3a;">0</div>
<div class="t" style="left:1273.30px;top:720.36px;font-size:12.8px;line-height:12.8px;color:#3a3a3a;">09/28/2025 01:56:52 PM</div>
<div class="t" style="left:382.40px;top:749.36px;font-size:12.8px;line-height:12.8px;color:#858585;transform:scaleX(1.0277);">We'll send you full details on the generous discou...</div>
<div class="r" style="left:1px;top:769px;width:1444px;height:56px;background:#f9f9f9;"></div>
<div class="t" style="left:5.00px;top:776.36px;font-size:12.8px;line-height:12.8px;color:#3a3a3a;transform:scaleX(1.0467);">New York</div>
<div class="t" style="left:93.30px;top:776.36px;font-size:12.8px;line-height:12.8px;color:#3a3a3a;transform:scaleX(1.0209);">NY-IT-DT-102</div>
<div class="t" style="left:233.30px;top:776.36px;font-size:12.8px;line-height:12.8px;color:#3a3a3a;transform:scaleX(0.9173);">Lucy</div>
<svg class="r" style="left:353px;top:772px" width="19" height="20" viewBox="0 0 19 20"><g fill="none" stroke="#5f6b7c" stroke-width="1.2" stroke-linejoin="round"><path d="M1.9 14.4 L1.9 6.3 L7.7 2.2 L13.4 6.3 L13.4 10.8"/><path d="M1.9 6.3 L5.2 10.4 L10.2 10.4 L13.4 6.3"/><path d="M1.9 14.4 L7.2 14.4"/></g><path d="M8.6 15 H13.5" stroke="#0a74da" stroke-width="2.1"/><path d="M12.6 12.3 L17 15 L12.6 17.7 Z" fill="#0a74da" stroke="#0a74da" stroke-width="0.9" stroke-linejoin="round"/></svg>
<div class="t" style="left:378.20px;top:776.36px;font-size:12.8px;line-height:12.8px;color:#3a3a3a;">Lucy &lt;lucyli3612@outloo...</div>
<div class="t" style="left:541.40px;top:776.36px;font-size:12.8px;line-height:12.8px;color:#3a3a3a;transform:scaleX(1.0062);">annalin9451@outlook.co...</div>
<div class="t" style="left:704px;top:776.36px;font-size:12.8px;line-height:12.8px;color:#1f87d6;text-decoration:underline;transform:scaleX(1.0232);">Required Documents for New Employee Record</div>
<div class="t" style="left:1259.14px;top:776.36px;font-size:12.8px;line-height:12.8px;color:#3a3a3a;">0</div>
<div class="t" style="left:1273.30px;top:776.36px;font-size:12.8px;line-height:12.8px;color:#3a3a3a;">09/28/2025 01:46:23 PM</div>
<div class="t" style="left:382.40px;top:805.36px;font-size:12.8px;line-height:12.8px;color:#858585;transform:scaleX(1.0172);">Hi Anna,Welcome to the team!, please submit th...</div>
<div class="t" style="left:5.00px;top:832.36px;font-size:12.8px;line-height:12.8px;color:#3a3a3a;transform:scaleX(0.9706);">Shanghai</div>
<div class="t" style="left:93.30px;top:832.36px;font-size:12.8px;line-height:12.8px;color:#3a3a3a;">CN-MKT-DT-37</div>
<div class="t" style="left:233.30px;top:832.36px;font-size:12.8px;line-height:12.8px;color:#3a3a3a;transform:scaleX(0.9300);">Anna</div>
<svg class="r" style="left:353px;top:828px" width="19" height="20" viewBox="0 0 19 20"><g fill="none" stroke="#5f6b7c" stroke-width="1.2" stroke-linejoin="round"><path d="M1.9 14.4 L1.9 6.3 L7.7 2.2 L13.4 6.3 L13.4 10.8"/><path d="M1.9 6.3 L5.2 10.4 L10.2 10.4 L13.4 6.3"/><path d="M1.9 14.4 L7.2 14.4"/></g><path d="M8.6 15 H13.5" stroke="#0a74da" stroke-width="2.1"/><path d="M12.6 12.3 L17 15 L12.6 17.7 Z" fill="#0a74da" stroke="#0a74da" stroke-width="0.9" stroke-linejoin="round"/></svg>
<div class="t" style="left:378.20px;top:832.36px;font-size:12.8px;line-height:12.8px;color:#3a3a3a;">Anna &lt;annalin9451@outl...</div>
<div class="t" style="left:541.40px;top:832.36px;font-size:12.8px;line-height:12.8px;color:#3a3a3a;">Lucyli3612@outlook.com;</div>
<div class="t" style="left:704px;top:832.36px;font-size:12.8px;line-height:12.8px;color:#1f87d6;text-decoration:underline;transform:scaleX(0.9782);">Purchase Request</div>
<div class="t" style="left:1259.14px;top:832.36px;font-size:12.8px;line-height:12.8px;color:#3a3a3a;">0</div>
<div class="t" style="left:1273.30px;top:832.36px;font-size:12.8px;line-height:12.8px;color:#3a3a3a;transform:scaleX(1.0149);">09/28/2025 11:15:12 AM</div>
<div class="r" style="left:1445px;top:267px;width:2px;height:449px;background:#949494;"></div>
<div class="r" style="left:1px;top:853px;width:1444px;height:22px;background:#fff;"></div>
<svg class="r" style="left:3px;top:860px" width="12" height="8" viewBox="0 0 12 8"><rect x="1" y="0.5" width="1.2" height="7" fill="#8a8a8a"/><path d="M6.5 0.5 L3 4 L6.5 7.5 Z M10.5 0.5 L7 4 L10.5 7.5 Z" fill="#8a8a8a"/></svg>
<svg class="r" style="left:20px;top:860px" width="10" height="8" viewBox="0 0 10 8"><path d="M4.5 0.5 L1 4 L4.5 7.5 Z M8.5 0.5 L5 4 L8.5 7.5 Z" fill="#8a8a8a"/></svg>
<svg class="r" style="left:38px;top:860px" width="6" height="8" viewBox="0 0 6 8"><path d="M4.5 0.5 L1 4 L4.5 7.5 Z" fill="#8a8a8a"/></svg>
<div class="t" style="left:57.70px;top:858.11px;font-size:13.1px;line-height:13.1px;color:#444;">Record 6 of 12</div>
<svg class="r" style="left:159px;top:860px" width="6" height="8" viewBox="0 0 6 8"><path d="M1 0.5 L4.5 4 L1 7.5 Z" fill="#8a8a8a"/></svg>
<svg class="r" style="left:172px;top:860px" width="10" height="8" viewBox="0 0 10 8"><path d="M1 0.5 L4.5 4 L1 7.5 Z M5 0.5 L8.5 4 L5 7.5 Z" fill="#8a8a8a"/></svg>
<svg class="r" style="left:186px;top:860px" width="12" height="8" viewBox="0 0 12 8"><path d="M1 0.5 L4.5 4 L1 7.5 Z M5 0.5 L8.5 4 L5 7.5 Z" fill="#8a8a8a"/><rect x="9" y="0.5" width="1.2" height="7" fill="#8a8a8a"/></svg>
<div class="r" style="left:0px;top:875px;width:1450px;height:25px;background:#106ebe;"></div>
<div class="t" style="left:9.70px;top:881.37px;font-size:12.2px;line-height:12.2px;color:#fff;">Ready</div>
<svg class="r" style="left:1185px;top:879px" width="15" height="16" viewBox="0 0 15 16"><path d="M7.5 0.5 L7.5 11" stroke="#5fb36b" stroke-width="2.6"/><path d="M1.5 5.2 L7.5 11.3 L13.5 5.2" fill="none" stroke="#5fb36b" stroke-width="2.6"/><rect x="0.5" y="13.6" width="14" height="2.2" fill="#5fb36b"/></svg>
<div class="t" style="left:1206.90px;top:880.95px;font-size:12.7px;line-height:12.7px;color:#fff;">Task Center</div>
<svg class="r" style="left:1291px;top:882px" width="16" height="11" viewBox="0 0 16 11"><rect x="0" y="0" width="15.5" height="10.5" fill="#fff"/><rect x="10.5" y="1.5" width="3.5" height="3.5" fill="#106ebe"/><path d="M2.5 6.3h8M2.5 8.3h8" stroke="#106ebe" stroke-width="0.9"/></svg>
<div class="t" style="left:1312.60px;top:880.95px;font-size:12.7px;line-height:12.7px;color:#fff;transform:scaleX(1.0114);">555 unread messages</div>
<div class="r" style="left:0;top:0;width:1450px;height:900px;box-sizing:border-box;border:1px solid #0b66c3;"></div>
</body></html>
